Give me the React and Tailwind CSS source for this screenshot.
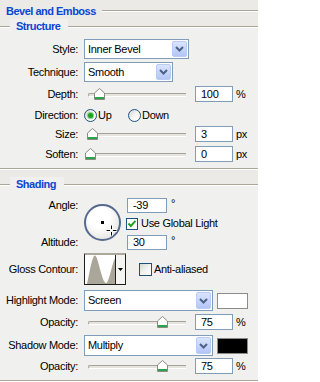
import React from "react";

function Chevron() {
  return (
    <svg width="9" height="6" viewBox="0 0 9 6">
      <path d="M1 1L4.5 4.5L8 1" fill="none" stroke="#4d6185" strokeWidth="2" />
    </svg>
  );
}

function Select({ value, className }) {
  return (
    <div className={`flex shrink-0 items-center border border-[#7f9db9] bg-white ${className}`}>
      <span className="flex-1 pl-[3px]">{value}</span>
      <span className="my-[1px] mr-[1px] flex w-[15px] items-center justify-center self-stretch rounded-[2px] border border-[#b9ccf7] bg-gradient-to-b from-[#dae4fd] to-[#b2c6f6]">
        <Chevron />
      </span>
    </div>
  );
}

function Label({ children }) {
  return <div className="w-[78px] shrink-0 whitespace-nowrap text-right">{children}</div>;
}

function Num({ v, className = "w-[38px] h-[16px]" }) {
  return (
    <div className={`flex shrink-0 items-center border border-[#7f9db9] bg-white pl-[5px] ${className}`}>
      {v}
    </div>
  );
}

function Slider({ left }) {
  return (
    <div className="relative ml-[4px] h-[16px] w-[98px] shrink-0">
      <div className="absolute inset-x-0 top-[7px] h-[4px] rounded-l-[2px] border-l border-t border-b border-[#a5a49a] border-b-white bg-[#e4e3dd]" />
      <svg className="absolute top-[2px]" style={{ left }} width="11" height="12" viewBox="0 0 11 12">
        <path d="M5.5 0.5L10.5 5V11.5H0.5V5Z" fill="#ffffff" stroke="#8b8b85" />
        <rect x="1" y="9" width="9" height="2" fill="#2aa34a" />
      </svg>
    </div>
  );
}

function SliderRow({ label, value, unit, left, className }) {
  return (
    <div className={`flex h-[16px] items-center ${className}`}>
      <Label>{label}</Label>
      <div className="ml-[6px]" />
      <Slider left={left} />
      <div className="ml-[9px]" />
      <Num v={value} />
      <span className="ml-[3px]">{unit}</span>
    </div>
  );
}

function Radio({ on }) {
  return (
    <span className="flex h-[13px] w-[13px] shrink-0 items-center justify-center rounded-full border border-[#1c5180] bg-gradient-to-br from-[#d6d4cc] via-[#f6f6f4] to-white">
      {on && <span className="h-[5px] w-[5px] rounded-full bg-[#21a121] shadow-[0_0_0_1px_#7fd37f]" />}
    </span>
  );
}

function Legend({ children }) {
  return (
    <div className="-mt-[8px] ml-[10px] flex h-[14px] w-fit items-center bg-[#f0f0ee] pl-[6px] pr-[8px] font-bold tracking-[-0.5px] text-[#0a46d2]">
      {children}
    </div>
  );
}

export default function App() {
  return (
    <div className="h-[382px] w-[258px] overflow-hidden bg-[#ebeae6] font-['Liberation_Sans',Arial,sans-serif] text-[11px] leading-[13px] tracking-[-0.3px] text-black">
      {/* Bevel and Emboss header */}
      <div className="flex h-[22px] items-center pl-[6px]">
        <span className="font-bold tracking-[-0.5px] text-[#0a46d2]">Bevel and Emboss</span>
        <div className="ml-[6px] h-[2px] flex-1 border-t border-b border-[#aca899] border-b-white" />
      </div>

      {/* Structure */}
      <div className="mt-[4px] border-t border-b border-[#aca899] bg-[#f0f0ee] pb-[6px] shadow-[inset_0_1px_0_#ffffff,0_1px_0_#ffffff]">
        <Legend>Structure</Legend>
        <div className="mt-[6px] flex h-[20px] items-center">
          <Label>Style:</Label>
          <Select value="Inner Bevel" className="ml-[6px] h-[20px] w-[105px]" />
        </div>
        <div className="mt-[3px] flex h-[20px] items-center">
          <Label>Technique:</Label>
          <Select value="Smooth" className="ml-[6px] h-[20px] w-[89px]" />
        </div>
        <SliderRow label="Depth:" value="100" unit="%" left={6} className="mt-[4px]" />
        <div className="mt-[6px] flex h-[15px] items-center">
          <Label>Direction:</Label>
          <div className="ml-[6px] flex w-[44px] items-center">
            <Radio on />
            <span className="ml-[1px]">Up</span>
          </div>
          <Radio />
          <span className="ml-[1px]">Down</span>
        </div>
        <SliderRow label="Size:" value="3" unit="px" left={-1} className="mt-[3px]" />
        <SliderRow label="Soften:" value="0" unit="px" left={-3} className="mt-[4px]" />
      </div>

      {/* Shading */}
      <div className="mt-[15px] border-t border-b border-[#aca899] bg-[#f0f0ee] pb-[6px] shadow-[inset_0_1px_0_#ffffff,0_1px_0_#ffffff]">
        <Legend>Shading</Legend>

        <div className="mt-[7px] flex">
          <div className="flex w-[78px] shrink-0 flex-col justify-between text-right leading-[15px]">
            <div>Angle:</div>
            <div>Altitude:</div>
          </div>
          <div className="relative ml-[6px] mt-[6px] flex h-[37px] w-[37px] shrink-0 items-center justify-center self-start rounded-full border-2 border-[#56698f] bg-[radial-gradient(circle_at_40%_35%,#ffffff_35%,#d9d9d4_100%)]">
            <span className="h-[3px] w-[3px] bg-black" />
            <svg className="absolute left-[20px] top-[19px]" width="11" height="11" viewBox="0 0 11 11">
              <path d="M5.5 0V4M5.5 7V11M0 5.5H4M7 5.5H11" stroke="#ffffff" strokeWidth="2.5" />
              <path d="M5.5 0.5V4M5.5 7V10.5M0.5 5.5H4M7 5.5H10.5" stroke="#000000" strokeWidth="1" />
            </svg>
          </div>
          <div className="ml-[6px] flex flex-col">
            <div className="flex h-[15px]">
              <Num v="-39" className="h-[15px] w-[40px]" />
              <span className="ml-[4px] -mt-[1px]">°</span>
            </div>
            <div className="mt-[4px] flex h-[13px] items-center">
              <span className="-ml-[1px] flex h-[12px] w-[12px] items-center justify-center border border-[#1c5180] bg-white">
                <svg width="10" height="10" viewBox="0 0 10 10">
                  <path d="M1.5 4.5L3.8 7L8.5 1.8" fill="none" stroke="#21a121" strokeWidth="2" />
                </svg>
              </span>
              <span className="ml-[3px]">Use Global Light</span>
            </div>
            <div className="mt-[5px] flex h-[15px]">
              <Num v="30" className="h-[15px] w-[40px]" />
              <span className="ml-[4px] -mt-[1px]">°</span>
            </div>
          </div>
        </div>

        <div className="mt-[3px] flex h-[32px] items-center">
          <Label>Gloss Contour:</Label>
          <div className="ml-[6px] flex h-[32px] w-[42px] shrink-0 border border-[#1e1e1e] border-t-2 border-t-[#aca899] bg-white">
            <svg width="30" height="29" viewBox="0 0 30 29" className="shrink-0">
              <path d="M0 29L2 29C4.5 19 7 0.5 10 0.5C13 0.5 17 28 21 28C24 28 27 8 30 3.5L30 29Z" fill="#aaa79a" />
            </svg>
            <div className="flex flex-1 items-center justify-center border-l border-[#1e1e1e] bg-[#f4f4f2]">
              <svg width="5" height="3" viewBox="0 0 5 3">
                <path d="M0 0H5L2.5 3Z" fill="#000" />
              </svg>
            </div>
          </div>
          <span className="ml-[13px] h-[13px] w-[13px] shrink-0 border border-[#1c5180] bg-gradient-to-br from-[#d8d6ce] via-[#f2f2f0] to-white" />
          <span className="ml-[2px]">Anti-aliased</span>
        </div>

        <div className="mt-[5px] flex h-[21px] items-center">
          <Label>Highlight Mode:</Label>
          <Select value="Screen" className="ml-[6px] h-[21px] w-[129px]" />
          <span className="ml-[4px] h-[16px] w-[31px] shrink-0 border border-[#8c8c8c] bg-white" />
        </div>
        <SliderRow label="Opacity:" value="75" unit="%" left={69} className="mt-[3px]" />
        <div className="mt-[5px] flex h-[21px] items-center">
          <Label>Shadow Mode:</Label>
          <Select value="Multiply" className="ml-[6px] h-[21px] w-[129px]" />
          <span className="ml-[4px] h-[16px] w-[31px] shrink-0 border border-[#8c8c8c] bg-black" />
        </div>
        <SliderRow label="Opacity:" value="75" unit="%" left={69} className="mt-[2px]" />
      </div>
    </div>
  );
}
